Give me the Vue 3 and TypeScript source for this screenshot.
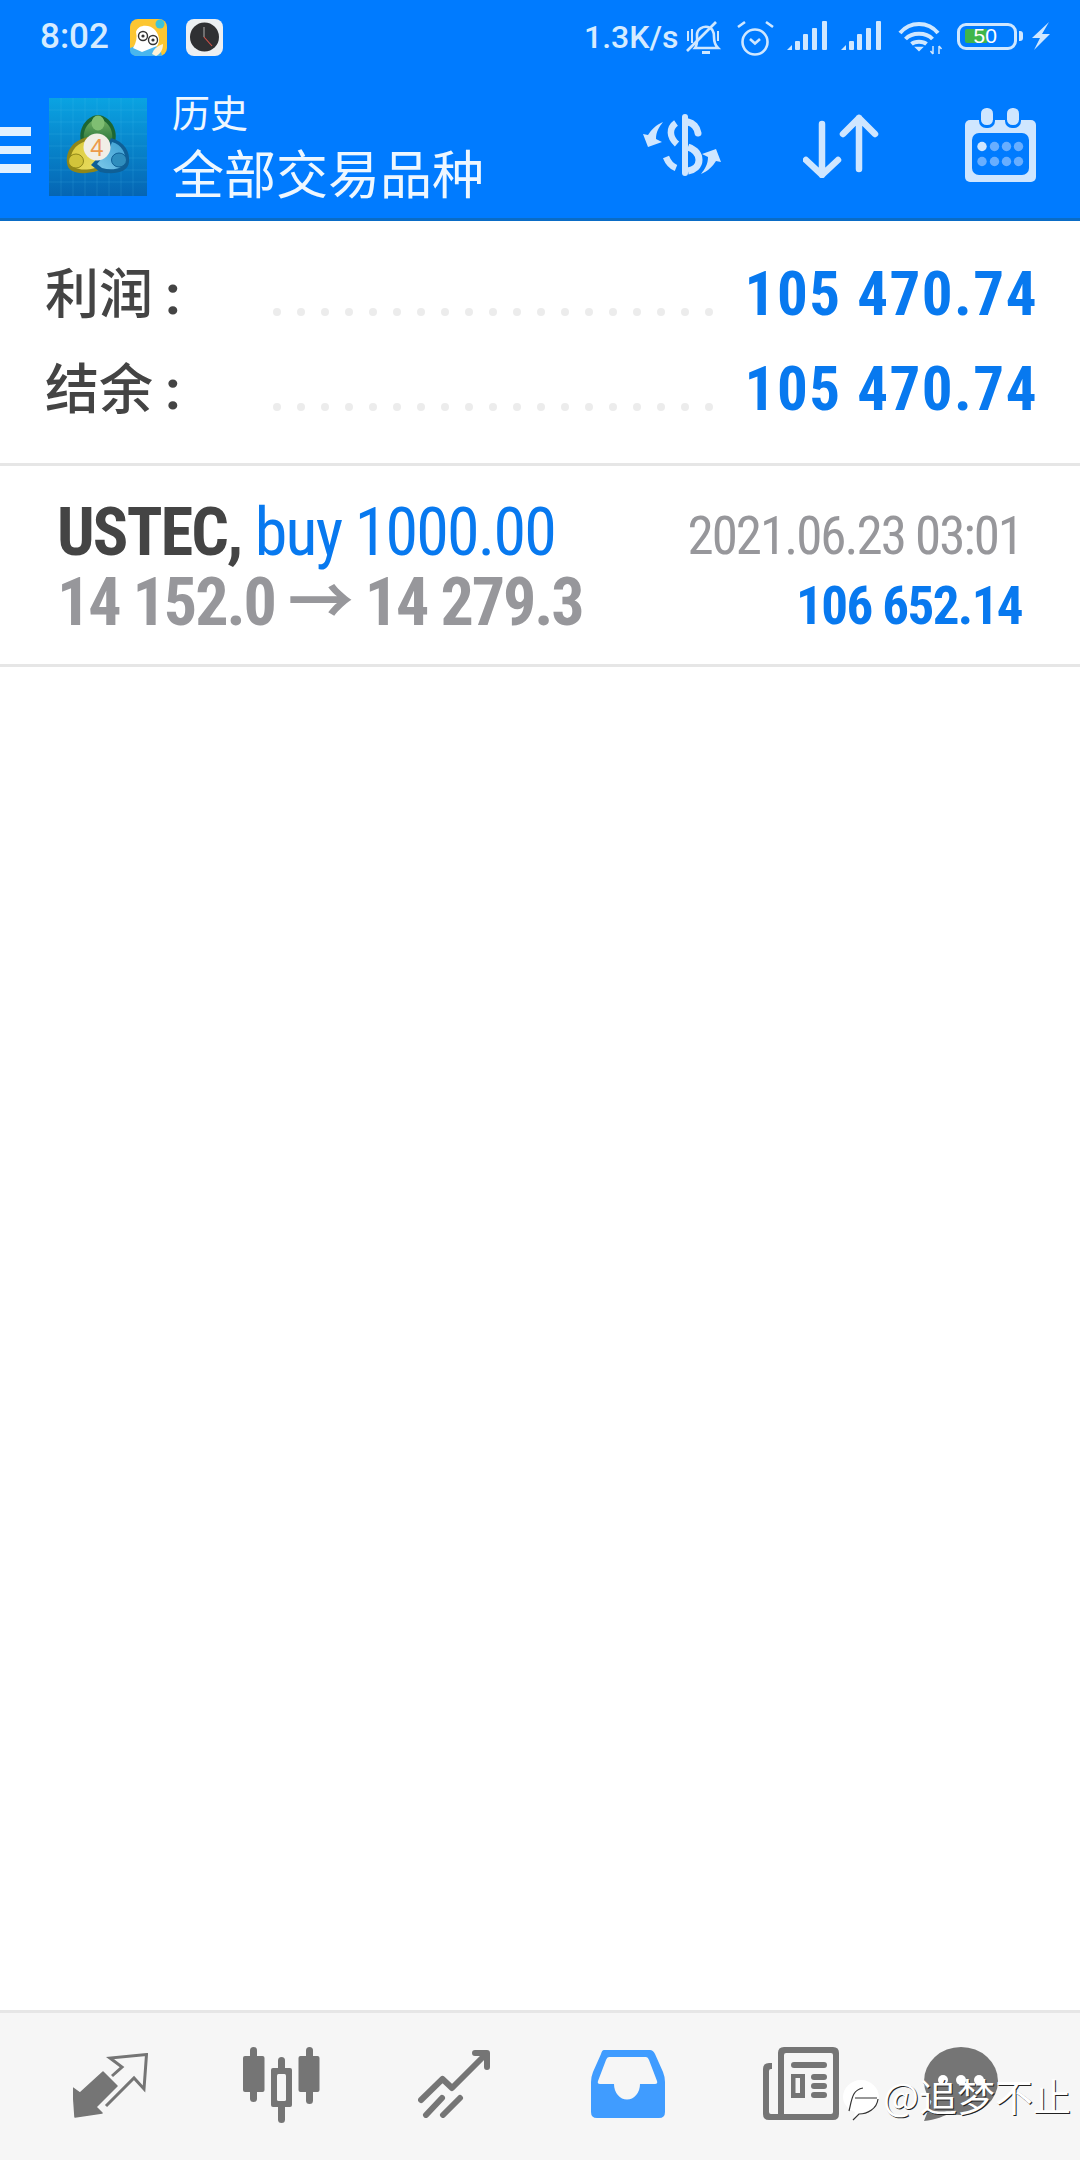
<script setup lang="ts">
const dots: number[] = Array.from({ length: 19 }, (_, i) => i);
const summary = [
  { label: '利润', value: '105 470.74' },
  { label: '结余', value: '105 470.74' },
];
const bars: number[][] = [
  [0, 45],
  [8, 41],
  [16, 34],
  [25, 28],
  [35, 21],
];
const dotRow1: number[] = [982, 994.5, 1006.5, 1018.5];
const gridLines: number[] = [12, 24, 36, 48, 60, 72, 84];
</script>

<template>
  <div class="screen">
    <header class="top">
      <div class="status">
        <span class="time">8:02</span>
        <svg class="app-one" viewBox="130 19 37 37" width="37" height="37">
          <rect x="130" y="19" width="37" height="37" rx="8" fill="#fcc632" />
          <path d="M130 48 L146 42 L160 48 L162 56 L138 56 Q130 56 130 50Z" fill="#49b6ee" />
          <path d="M136 32 C138 24 150 24 155 30 C160 36 160 42 157 46 L142 52 L133 48 Q138 40 136 32Z" fill="#fff" />
          <circle cx="143" cy="36" r="4.5" fill="#fff" stroke="#333" stroke-width="1.4" />
          <circle cx="153" cy="40" r="4.5" fill="#fff" stroke="#333" stroke-width="1.4" />
          <circle cx="143" cy="36" r="1.6" fill="#333" />
          <circle cx="153" cy="40" r="1.6" fill="#333" />
          <path d="M152 54 C154 48 158 46 163 44 C163 50 160 54 156 56Z" fill="#fdf3d8" />
          <circle cx="160" cy="24" r="4.5" fill="#3ec3d8" />
        </svg>
        <svg class="app-two" viewBox="186 19 37 37" width="37" height="37">
          <rect x="186" y="19" width="37" height="37" rx="8" fill="#eceff2" />
          <circle cx="204.500" cy="37" r="14.500" fill="#2f3033" />
          <path d="M204 27 V37" stroke="#9a9a9a" stroke-width="1.2" fill="none" />
          <path d="M204 37 L212 46" stroke="#d9534a" stroke-width="1.1" fill="none" />
        </svg>
        <span class="speed">1.3K/s</span>
        <svg class="s-bell" viewBox="686 20 36 36" width="36" height="36" fill="none" stroke="#cfe7ff" stroke-width="2.600">
          <path d="M695 48 C698 44 697 40 697 35 C697 29 703 26 708 27 C713 28 714 33 714 37 C714 42 715 45 718 48 Z" />
          <path d="M687 51 L716 22" />
          <path d="M702 52.500 H710" stroke-width="3" />
          <path d="M688 31 V41 M692 29 V43 M718 31 V41" stroke-width="2" />
        </svg>
        <svg class="s-alarm" viewBox="737 20 37 36" width="37" height="36" fill="none" stroke="#cfe7ff" stroke-width="2.600">
          <circle cx="755" cy="42" r="12.500" />
          <path d="M738 27 L745 22 M766 22 L773 27" />
          <path d="M750 39 L755 43.500 L760 39" />
        </svg>
        <svg v-for="n in 2" :key="n" class="s-signal" viewBox="787 20 41 31" width="41" height="31" fill="#cfe7ff">
          <path d="M787 50 L792 45 V50Z" />
          <rect v-for="(b, i) in bars.slice(1)" :key="i" :x="787 + b[0]" :y="b[1]" width="5" :height="50 - b[1]" rx="1" />
        </svg>
        <svg class="s-wifi" viewBox="899 20 45 36" width="45" height="36" fill="none" stroke="#cfe7ff" stroke-width="4">
          <path d="M901 33 C911 21 929 21 939 33" />
          <path d="M906.500 39 C913 32 927 32 933.500 39" />
          <path d="M912.500 44 C916 41 924 41 927.500 44" />
          <path d="M917 47.500 L920 50.500 L923 47.500 Z" fill="#cfe7ff" stroke-width="1.500" />
          <path d="M934 46 V54 M931.500 51 L934 54 M940 46 V54 M940 46 L942.500 49" stroke-width="1.500" />
        </svg>
        <div class="battery">
          <span class="level"></span>
          <span class="pct">50</span>
        </div>
        <span class="nub"></span>
        <svg class="s-bolt" viewBox="1033 22 18 29" width="18" height="29" fill="#cfe7ff">
          <path d="M1050 22 L1033 38 H1041 L1035 50 L1051 34 H1043 Z" />
        </svg>
      </div>
      <div class="toolbar">
        <div class="burger"><i></i><i></i><i></i></div>
        <svg class="logo" viewBox="0 0 98 98" width="98" height="98">
          <defs>
            <linearGradient id="lg" x1="0" y1="0" x2="0" y2="1">
              <stop offset="0" stop-color="#0aa3e2" />
              <stop offset="1" stop-color="#0565b3" />
            </linearGradient>
            <linearGradient id="gr" x1="0" y1="0" x2="0" y2="1">
              <stop offset="0" stop-color="#6fae62" />
              <stop offset="1" stop-color="#1f6c34" />
            </linearGradient>
            <linearGradient id="ye" x1="0" y1="0" x2="1" y2="1">
              <stop offset="0" stop-color="#dccb3a" />
              <stop offset="1" stop-color="#e8dc62" />
            </linearGradient>
            <linearGradient id="bl" x1="1" y1="0" x2="0" y2="1">
              <stop offset="0" stop-color="#3a9ed2" />
              <stop offset="1" stop-color="#7cc8ea" />
            </linearGradient>
          </defs>
          <rect width="98" height="98" fill="url(#lg)" />
          <g stroke="#5ec4f0" stroke-opacity=".16" stroke-width="1">
            <path v-for="g in gridLines" :key="'h' + g" :d="`M0 ${g} H98`" />
            <path v-for="g in gridLines" :key="'v' + g" :d="`M${g} 0 V98`" />
          </g>
          <path d="M32 44 C28 28 41 17 49 17 C57 17 70 28 66 44 L49 52Z" fill="#1c6632" />
          <path d="M35 42 C33 30 42 21 49 21 C56 21 65 30 63 42 L49 49Z" fill="url(#gr)" />
          <path d="M39 39 C22 43 17 54 18 65 C19 76 34 77 48 73 L56 67 L41 50 Z" fill="#8f8618" />
          <path d="M37 43 C25 47 21 55 22 64 C23 72 35 73 46 70 L50 66 L38 52 Z" fill="url(#ye)" />
          <path d="M62 40 C76 44 81 54 80 64 C79 75 64 77 51 74 L42 67 L58 50 Z" fill="#0f5f96" />
          <path d="M63 44 C73 47 77 55 76 63 C75 71 63 73 53 70 L48 66 L60 52 Z" fill="url(#bl)" />
          <ellipse cx="49" cy="25" rx="6.500" ry="7.500" fill="#7fbe72" />
          <ellipse cx="27" cy="63" rx="7.500" ry="7" fill="#d2c43a" stroke="#8f8618" stroke-width="1" />
          <ellipse cx="70" cy="62" rx="7.500" ry="7" fill="#2f8dbd" stroke="#0f5f96" stroke-width="1" />
          <circle cx="48" cy="49" r="13.500" fill="#f1eee6" />
          <text x="48" y="57.500" text-anchor="middle" class="logo-four">4</text>
        </svg>
        <div class="titles">
          <div class="t-small">历史</div>
          <div class="t-big">全部交易品种</div>
        </div>
        <svg class="a-dollar" viewBox="642 114 80 62" width="80" height="62" fill="none" stroke="#cfe6ff">
          <rect x="682" y="114" width="6" height="62" rx="3" fill="#cfe6ff" stroke="none" />
          <path d="M688 122 C693 123 697 127 698 133" stroke-width="7" stroke-linecap="round" />
          <path d="M688 147 C696 150 699 155 699 160 C699 166 694 170 688 171" stroke-width="7" />
          <path d="M676 123 C669 128 669 137 677 144" stroke-width="6.500" />
          <path d="M666 157 C668 162 671 166 676 168" stroke-width="6.500" />
          <path d="M663 122 C656 125 651 130 648 135 L643 134 L648 147 L662 142 L656 139 C656 132 659 127 663 122 Z" fill="#cfe6ff" stroke="none" />
          <path d="M663 122 C656 125 651 130 648 135 L643 134 L648 147 L662 142 L656 139 C656 132 659 127 663 122 Z" transform="rotate(180 682 148)" fill="#cfe6ff" stroke="none" />
        </svg>
        <svg class="a-arrows" viewBox="803 114 76 64" width="76" height="64" fill="none" stroke="#cfe6ff" stroke-width="6.500" stroke-linecap="round" stroke-linejoin="round">
          <path d="M822 124 V175 M806 160 L822 175 L838 160" />
          <path d="M859 169 V118 M843 134 L859 118 L875 134" />
        </svg>
        <svg class="a-cal" viewBox="965 108 71 74" width="71" height="74">
          <rect x="965" y="120" width="71" height="62" rx="5" fill="#cfe6ff" />
          <rect x="972" y="133" width="57" height="42" rx="7" fill="#007bff" />
          <rect x="979" y="106" width="16" height="22" rx="7" fill="#007bff" />
          <rect x="1005" y="106" width="16" height="22" rx="7" fill="#007bff" />
          <rect x="981" y="108" width="12" height="17" rx="5.500" fill="#cfe6ff" />
          <rect x="1007" y="108" width="12" height="17" rx="5.500" fill="#cfe6ff" />
          <circle v-for="(x, i) in dotRow1" :key="'a' + i" :cx="x" cy="146.500" r="4.700" :fill="i === 0 ? '#cfe6ff' : '#68aeff'" />
          <circle v-for="(x, i) in dotRow1" :key="'b' + i" :cx="x" cy="161.500" r="4.700" fill="#68aeff" />
        </svg>
      </div>
    </header>

    <section class="summary">
      <div v-for="row in summary" :key="row.label" class="sum-row">
        <span class="sum-label">{{ row.label }}<span class="colon">:</span></span>
        <span class="sum-dots"><i v-for="d in dots" :key="d"></i></span>
        <span class="sum-value">{{ row.value }}</span>
      </div>
    </section>

    <section class="trade">
      <div class="trade-left">
        <div class="line-one"><b>USTEC,</b> <span class="side">buy 1000.00</span></div>
        <div class="line-two">14 152.0 → 14 279.3</div>
      </div>
      <div class="trade-right">
        <div class="date">2021.06.23 03:01</div>
        <div class="profit">106 652.14</div>
      </div>
    </section>

    <main class="empty"></main>

    <nav class="bottom">
      <svg class="n1" viewBox="73 2053 75 65" width="75" height="65">
        <path d="M73 2088 L80 2093 L103 2072 L117 2086 L96 2107 L102 2113 L75 2117Z" fill="#757575" stroke="#757575" stroke-width="1.500" stroke-linejoin="round" />
        <path d="M106 2106 L134 2078 L144 2089 L146.500 2054.500 L110 2058 L122 2067 L112 2076" fill="none" stroke="#757575" stroke-width="3" />
      </svg>
      <svg class="n2" viewBox="243 2047 77 76" width="77" height="76" fill="#757575">
        <rect x="250" y="2047" width="7" height="55" rx="3.500" />
        <rect x="243" y="2056" width="21.500" height="36" rx="2" />
        <rect x="278" y="2057" width="7" height="66" rx="3.500" />
        <rect x="271" y="2068" width="21" height="39" rx="2" />
        <rect x="277" y="2074" width="9" height="27" rx="1.500" fill="#f6f6f6" />
        <rect x="306" y="2047" width="7" height="57" rx="3.500" />
        <rect x="298.500" y="2056" width="21" height="36" rx="2" />
      </svg>
      <svg class="n3" viewBox="418 2050 73 68" width="73" height="68" fill="none" stroke="#757575" stroke-width="6" stroke-linecap="round" stroke-linejoin="round">
        <path d="M421 2100 L442.500 2079 L452 2088 L486 2054" />
        <path d="M475 2053 H487 V2067" />
        <path d="M442 2098 L426 2115 M460 2098 L443 2115" />
      </svg>
      <svg class="n4" viewBox="591 2050 74 68" width="74" height="68">
        <path d="M604 2050 H650 Q653 2050 655 2054 L663 2072 Q665 2077 665 2082 V2112 Q665 2118 659 2118 H597 Q591 2118 591 2112 V2082 Q591 2077 593 2072 L601 2054 Q602 2050 604 2050Z" fill="#409cff" />
        <path d="M609 2057 H646 Q648 2057 649 2060 L657 2081 Q658 2084 655 2084 H640 A12.500 15 0 0 1 614 2084 H600 Q597 2084 598 2081 L606 2060 Q607 2057 609 2057Z" fill="#f6f6f6" />
      </svg>
      <svg class="n5" viewBox="763 2047 76 74" width="76" height="74" fill="#757575">
        <path d="M784 2047 H833 Q839 2047 839 2053 V2114 Q839 2120 833 2120 H769 Q763 2120 763 2114 V2069 Q763 2063 769 2063 H772 V2069 H771 Q769 2069 769 2071 V2112 Q769 2114 771 2114 H778 V2053 Q778 2047 784 2047Z M786 2053 Q784 2053 784 2055 V2114 H831 Q833 2114 833 2112 V2055 Q833 2053 831 2053Z" fill-rule="evenodd" />
        <rect x="791" y="2062" width="36" height="6" rx="3" />
        <path d="M791 2074 H805 V2098 H791Z M795.500 2078 V2093 H800 V2078Z" fill-rule="evenodd" />
        <rect x="811" y="2074" width="16" height="6" rx="3" />
        <rect x="811" y="2083" width="16" height="6" rx="3" />
        <rect x="811" y="2092" width="16" height="6" rx="3" />
      </svg>
      <svg class="n6" viewBox="924 2047 74 74" width="74" height="74">
        <ellipse cx="961" cy="2081" rx="37" ry="34" fill="#757575" />
        <path d="M932 2100 L924 2121 C935 2120 945 2116 952 2112 Z" fill="#757575" />
        <circle cx="943" cy="2080" r="5" fill="#fff" />
        <circle cx="961" cy="2080" r="5" fill="#fff" />
        <circle cx="979" cy="2080" r="5" fill="#fff" />
      </svg>
      <div class="mark">
        <svg class="mark-logo" viewBox="0 0 36 42" width="36" height="42">
          <path d="M18 1 C28 1 36 9 36 18 C36 28 26 34 18 34 L10 42 L12 33 C5 30 0 25 0 18 C0 9 8 1 18 1Z" fill="#fff" />
          <path d="M6 32 C9 20 9 11 20 9 M12 19 H34 M35 20 C34 30 24 35 16 35 L10 41" fill="none" stroke="#333" stroke-width="1.200" />
        </svg>
        <span class="mark-text">@追梦不止</span>
      </div>
    </nav>
  </div>
</template>

<style scoped>
.screen {
  position: relative;
  width: 1080px;
  height: 2160px;
  display: flex;
  flex-direction: column;
  background: #fff;
  overflow: hidden;
  font-family: Roboto, "Noto Sans CJK SC", sans-serif;
}
svg {
  display: block;
  flex: none;
}
.top {
  height: 221px;
  background: #007bff;
  border-bottom: 3px solid #0a6cc6;
  box-sizing: border-box;
  flex: none;
}
.status {
  height: 76px;
  display: flex;
  align-items: flex-start;
  padding-left: 40px;
  color: #d5ebff;
}
.time {
  font-size: 35px;
  line-height: 74px;
  font-weight: 500;
  width: 90px;
  flex: none;
}
.app-one {
  margin-top: 19px;
}
.app-two {
  margin-top: 19px;
  margin-left: 19px;
}
.speed {
  font-size: 32px;
  line-height: 74px;
  font-weight: 500;
  margin-left: 361px;
  width: 102px;
  flex: none;
}
.s-bell {
  margin-top: 20px;
}
.s-alarm {
  margin-top: 20px;
  margin-left: 15px;
}
.s-signal {
  margin-top: 20px;
  margin-left: 13px;
}
.s-wifi {
  margin-top: 20px;
  margin-left: 16px;
}
.battery {
  position: relative;
  margin-top: 23px;
  margin-left: 14px;
  width: 60px;
  height: 27px;
  box-sizing: border-box;
  border: 3.5px solid #cfe7ff;
  border-radius: 9px;
  flex: none;
}
.level {
  position: absolute;
  left: 5px;
  top: 3px;
  width: 22px;
  height: 14px;
  border-radius: 2px 0 0 2px;
  background: #3fb54a;
}
.pct {
  position: absolute;
  left: 13.500px;
  top: -1px;
  font-size: 21px;
  line-height: 22px;
  color: #fff;
  font-family: "Liberation Sans", sans-serif;
}
.nub {
  margin-top: 31px;
  margin-left: 2px;
  width: 4px;
  height: 10px;
  border-radius: 0 3px 3px 0;
  background: #cfe7ff;
  flex: none;
}
.s-bolt {
  margin-top: 22px;
  margin-left: 9px;
}
.toolbar {
  height: 142px;
  display: flex;
  align-items: flex-start;
  position: relative;
}
.burger {
  width: 31px;
  margin-top: 51px;
  display: flex;
  flex-direction: column;
  gap: 10px;
  flex: none;
}
.burger i {
  display: block;
  height: 8.500px;
  background: #e2f1ff;
}
.logo {
  margin-top: 22px;
  margin-left: 18px;
}
.logo-four {
  font-size: 24px;
  fill: #ec9a4a;
  font-family: "Liberation Sans", sans-serif;
}
.titles {
  margin-left: 25px;
  width: 470px;
  flex: none;
  color: #eef7ff;
  font-family: "Noto Sans CJK SC", sans-serif;
}
.t-small {
  font-size: 38px;
  line-height: 40px;
  margin-top: 15px;
}
.t-big {
  font-size: 52px;
  line-height: 60px;
  margin-top: 11px;
}
.a-dollar {
  margin-top: 38px;
}
.a-arrows {
  margin-top: 38px;
  margin-left: 81px;
}
.a-cal {
  margin-top: 32px;
  margin-left: 86px;
}
.summary {
  box-sizing: border-box;
  height: 245px;
  padding: 25px 42px 0 45px;
  border-bottom: 3px solid #e6e6e6;
  flex: none;
}
.sum-row {
  display: flex;
  height: 95px;
}
.sum-label {
  width: 228px;
  font-family: "Noto Sans CJK SC", sans-serif;
  font-size: 54px;
  font-weight: 500;
  line-height: 89px;
  color: #444;
  flex: none;
}
.colon {
  font-family: Roboto, sans-serif;
  font-weight: 700;
  font-size: 56px;
  margin-left: 12px;
}
.sum-dots {
  display: flex;
  gap: 16px;
  margin-top: 62px;
  flex: none;
}
.sum-dots i {
  display: block;
  width: 8px;
  height: 8px;
  border-radius: 50%;
  background: #ececec;
  flex: none;
}
.sum-value {
  margin-left: auto;
  font-size: 61px;
  font-weight: 700;
  line-height: 97px;
  color: #0879ef;
  font-stretch: 80%;
  letter-spacing: 1.500px;
  white-space: nowrap;
}
.trade {
  box-sizing: border-box;
  height: 201px;
  display: flex;
  justify-content: space-between;
  padding: 32px 58px 0 57px;
  border-bottom: 3px solid #e6e6e6;
  flex: none;
}
.line-one,
.line-two {
  font-size: 66px;
  line-height: 70px;
  white-space: nowrap;
  font-stretch: 75%;
  letter-spacing: -1.800px;
}
.line-one b {
  color: #444;
  font-weight: 700;
}
.side {
  color: #0879ef;
  font-weight: 400;
}
.line-two {
  color: #97979b;
  font-weight: 700;
  letter-spacing: -2.100px;
}
.trade-right {
  text-align: right;
  padding-top: 3px;
}
.date {
  font-size: 53px;
  line-height: 70px;
  color: #97979b;
  white-space: nowrap;
  font-stretch: 75%;
  letter-spacing: -2px;
}
.profit {
  font-size: 53px;
  line-height: 70px;
  font-weight: 700;
  color: #0879ef;
  white-space: nowrap;
  font-stretch: 75%;
  letter-spacing: -1.600px;
}
.empty {
  flex: 1;
}
.bottom {
  position: relative;
  height: 150px;
  box-sizing: border-box;
  background: #f6f6f6;
  border-top: 3px solid #e6e6e6;
  display: flex;
  align-items: flex-start;
  padding-left: 73px;
  flex: none;
}
.n1 {
  margin-top: 40px;
}
.n2 {
  margin-top: 34px;
  margin-left: 95px;
}
.n3 {
  margin-top: 37px;
  margin-left: 98px;
}
.n4 {
  margin-top: 37px;
  margin-left: 100px;
}
.n5 {
  margin-top: 34px;
  margin-left: 98px;
}
.n6 {
  margin-top: 34px;
  margin-left: 85px;
}
.mark {
  position: absolute;
  left: 843px;
  top: 66px;
  display: flex;
  align-items: flex-start;
}
.mark-text {
  margin-left: 4px;
  margin-top: -9px;
  font-family: "Noto Sans CJK SC", sans-serif;
  font-size: 38px;
  line-height: 50px;
  color: #fff;
  white-space: nowrap;
  text-shadow: 1px 1px 0 #222;
}
</style>
